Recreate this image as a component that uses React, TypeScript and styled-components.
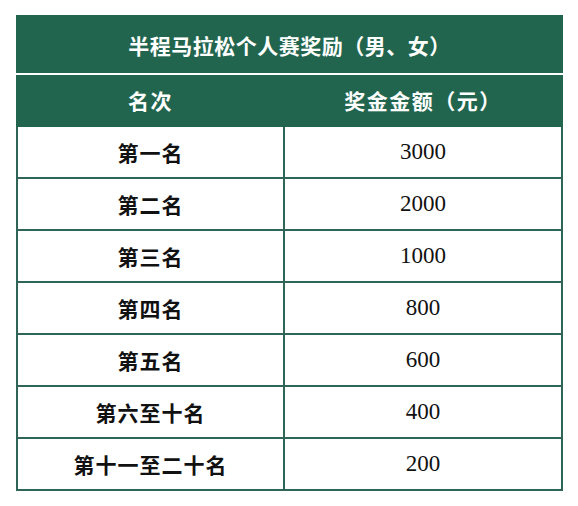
import React from 'react'
import styled, { createGlobalStyle } from 'styled-components'

const GlobalStyle = createGlobalStyle`
html, body {
  margin: 0;
  padding: 0;
  background: #ffffff;
}
`;

const Page = styled.div`
padding: 15px 15px 0 16px;
`;

const Table = styled.table`
width: 547px;
border-collapse: collapse;
table-layout: fixed;
font-family: "Liberation Serif", "Noto Sans CJK SC", serif;
`;

const RankCol = styled.col`
width: 267px;
`;

const TitleCell = styled.th`
height: 56px;
padding: 0;
background: #22654f;
color: #ffffff;
font-family: "Noto Sans CJK SC", sans-serif;
font-size: 21px;
font-weight: 700;
letter-spacing: 0.5px;
text-align: center;
border: 2px solid #22654f;
border-bottom: 2px solid #ffffff;
`;

const HeadCell = styled.th`
height: 50px;
padding: 0;
background: #22654f;
color: #ffffff;
font-family: "Noto Sans CJK SC", sans-serif;
font-size: 21px;
font-weight: 700;
letter-spacing: 1.5px;
text-align: center;
border: 2px solid #22654f;
border-top: 2px solid #ffffff;

& + & {
  border-left: 2px solid #ffffff;
}
`;

const Cell = styled.td<{ $rank?: boolean }>`
height: 50px;
padding: 0;
text-align: center;
color: #111111;
border: 2px solid #2e6556;
font-family: ${p => p.$rank ? '"Noto Sans CJK SC", sans-serif' : '"Liberation Serif", serif'};
font-size: ${p => p.$rank ? '21px' : '23px'};
font-weight: ${p => p.$rank ? 700 : 400};
letter-spacing: ${p => p.$rank ? '1px' : '0'};
`;

const prizes = [
  { rank: '第一名', amount: '3000' },
  { rank: '第二名', amount: '2000' },
  { rank: '第三名', amount: '1000' },
  { rank: '第四名', amount: '800' },
  { rank: '第五名', amount: '600' },
  { rank: '第六至十名', amount: '400' },
  { rank: '第十一至二十名', amount: '200' },
]

export default function App() {
  return (
    <Page>
      <GlobalStyle />
      <Table>
        <colgroup>
          <RankCol />
          <col />
        </colgroup>
        <thead>
          <tr>
            <TitleCell colSpan={2}>半程马拉松个人赛奖励（男、女）</TitleCell>
          </tr>
          <tr>
            <HeadCell>名次</HeadCell>
            <HeadCell>奖金金额（元）</HeadCell>
          </tr>
        </thead>
        <tbody>
          {prizes.map(p => (
            <tr key={p.rank}>
              <Cell $rank>{p.rank}</Cell>
              <Cell>{p.amount}</Cell>
            </tr>
          ))}
        </tbody>
      </Table>
    </Page>
  )
}
